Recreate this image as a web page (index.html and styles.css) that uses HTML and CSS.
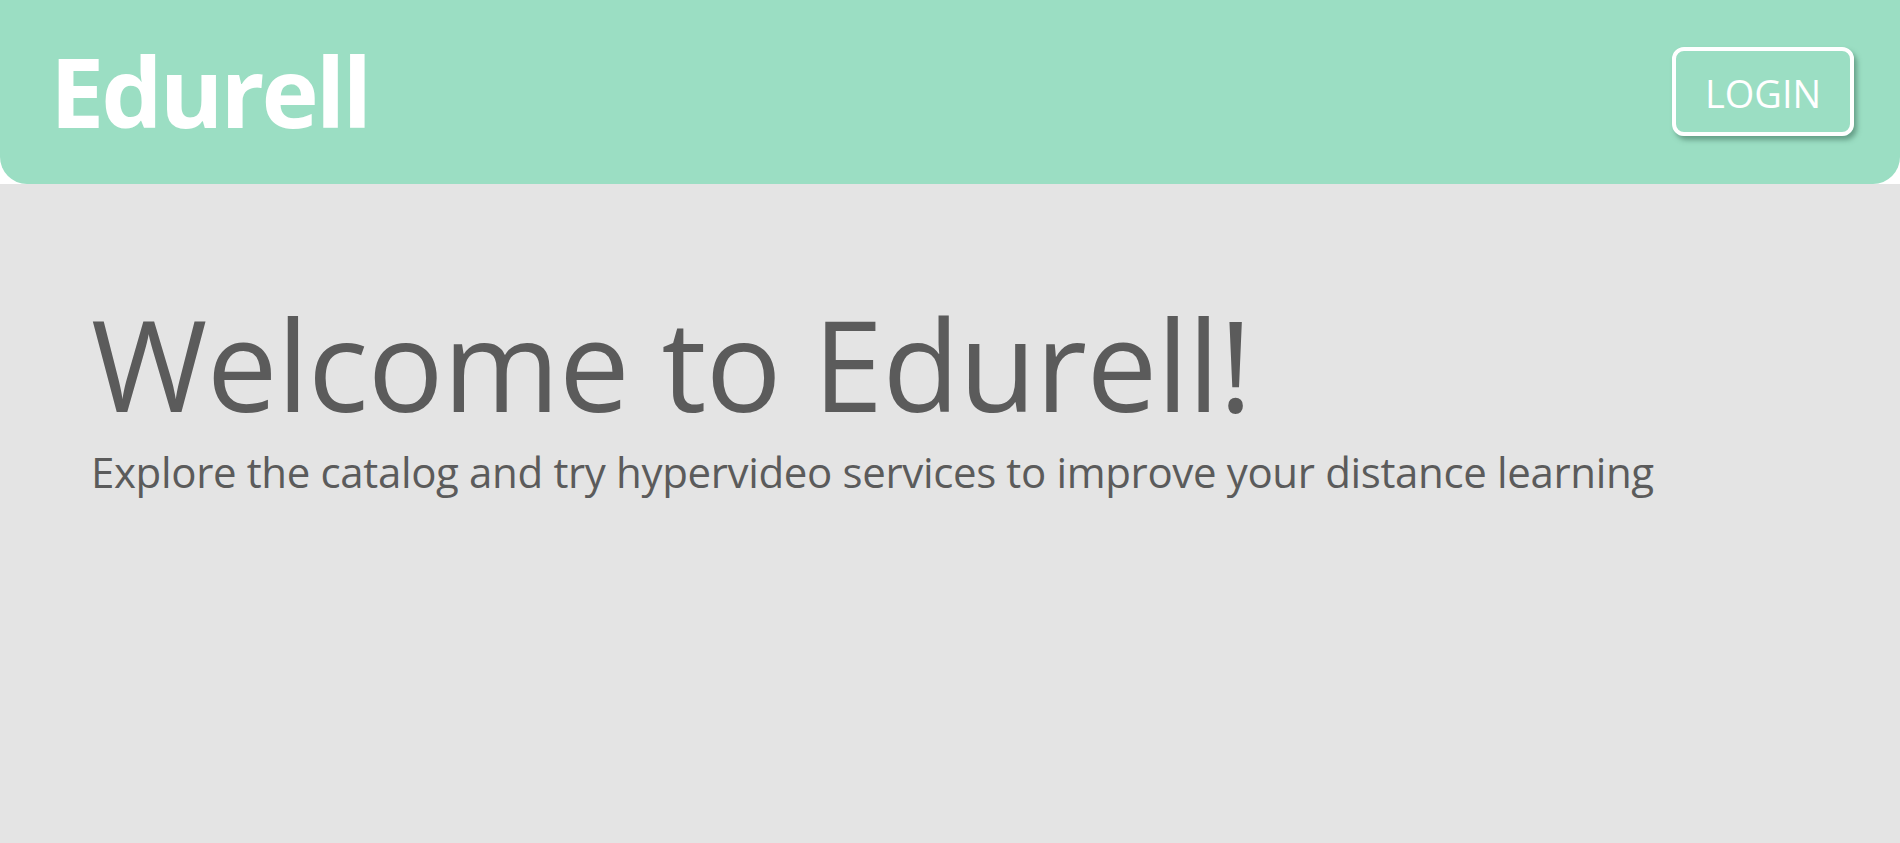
FILE: index.html
```html
<!DOCTYPE html>
<html lang="en">
<head>
<meta charset="utf-8">
<title>Edurell</title>
<link rel="stylesheet" href="styles.css">
</head>
<body>
<header class="topbar">
  <div class="brand">Edurell</div>
  <button class="login-btn">LOGIN</button>
</header>
<main class="hero">
  <h1 class="hero-title">Welcome to Edurell!</h1>
  <p class="hero-sub">Explore the catalog and try hypervideo services to improve your distance learning</p>
</main>
</body>
</html>
```

FILE: styles.css
```css
html, body {
  margin: 0;
  padding: 0;
  height: 100%;
}
body {
  background: #ffffff;
  font-family: "Open Sans", "Noto Sans", sans-serif;
  color: #5b5b5b;
  display: flex;
  flex-direction: column;
}
.topbar {
  background: #9bdec3;
  height: 184px;
  flex: none;
  box-sizing: border-box;
  border-radius: 0 0 27px 27px;
  display: flex;
  align-items: center;
  justify-content: space-between;
  padding: 0 46px 0 50px;
}
.brand {
  color: #fff;
  font-weight: 700;
  font-size: 97px;
  letter-spacing: -3px;
  line-height: 1;
  padding-bottom: 4px;
}
.login-btn {
  background: transparent;
  border: 4px solid #fff;
  border-radius: 12px;
  color: #fff;
  font-family: inherit;
  font-size: 38px;
  font-weight: 400;
  width: 182px;
  height: 89px;
  padding: 4px 0 0;
  margin-top: -2px;
  box-shadow: 3px 4px 5px rgba(60, 110, 90, 0.55);
  cursor: pointer;
}
.hero {
  flex: 1;
  padding: 0 80px 0 91px;
  background: #e4e4e4;
}
.hero-title {
  margin: 110px 0 0;
  font-weight: 400;
  font-size: 126px;
  letter-spacing: -0.6px;
  line-height: 1.1;
}
.hero-sub {
  margin: 12px 0 0;
  font-size: 42px;
  letter-spacing: -0.35px;
  line-height: 1.3;
}
```
